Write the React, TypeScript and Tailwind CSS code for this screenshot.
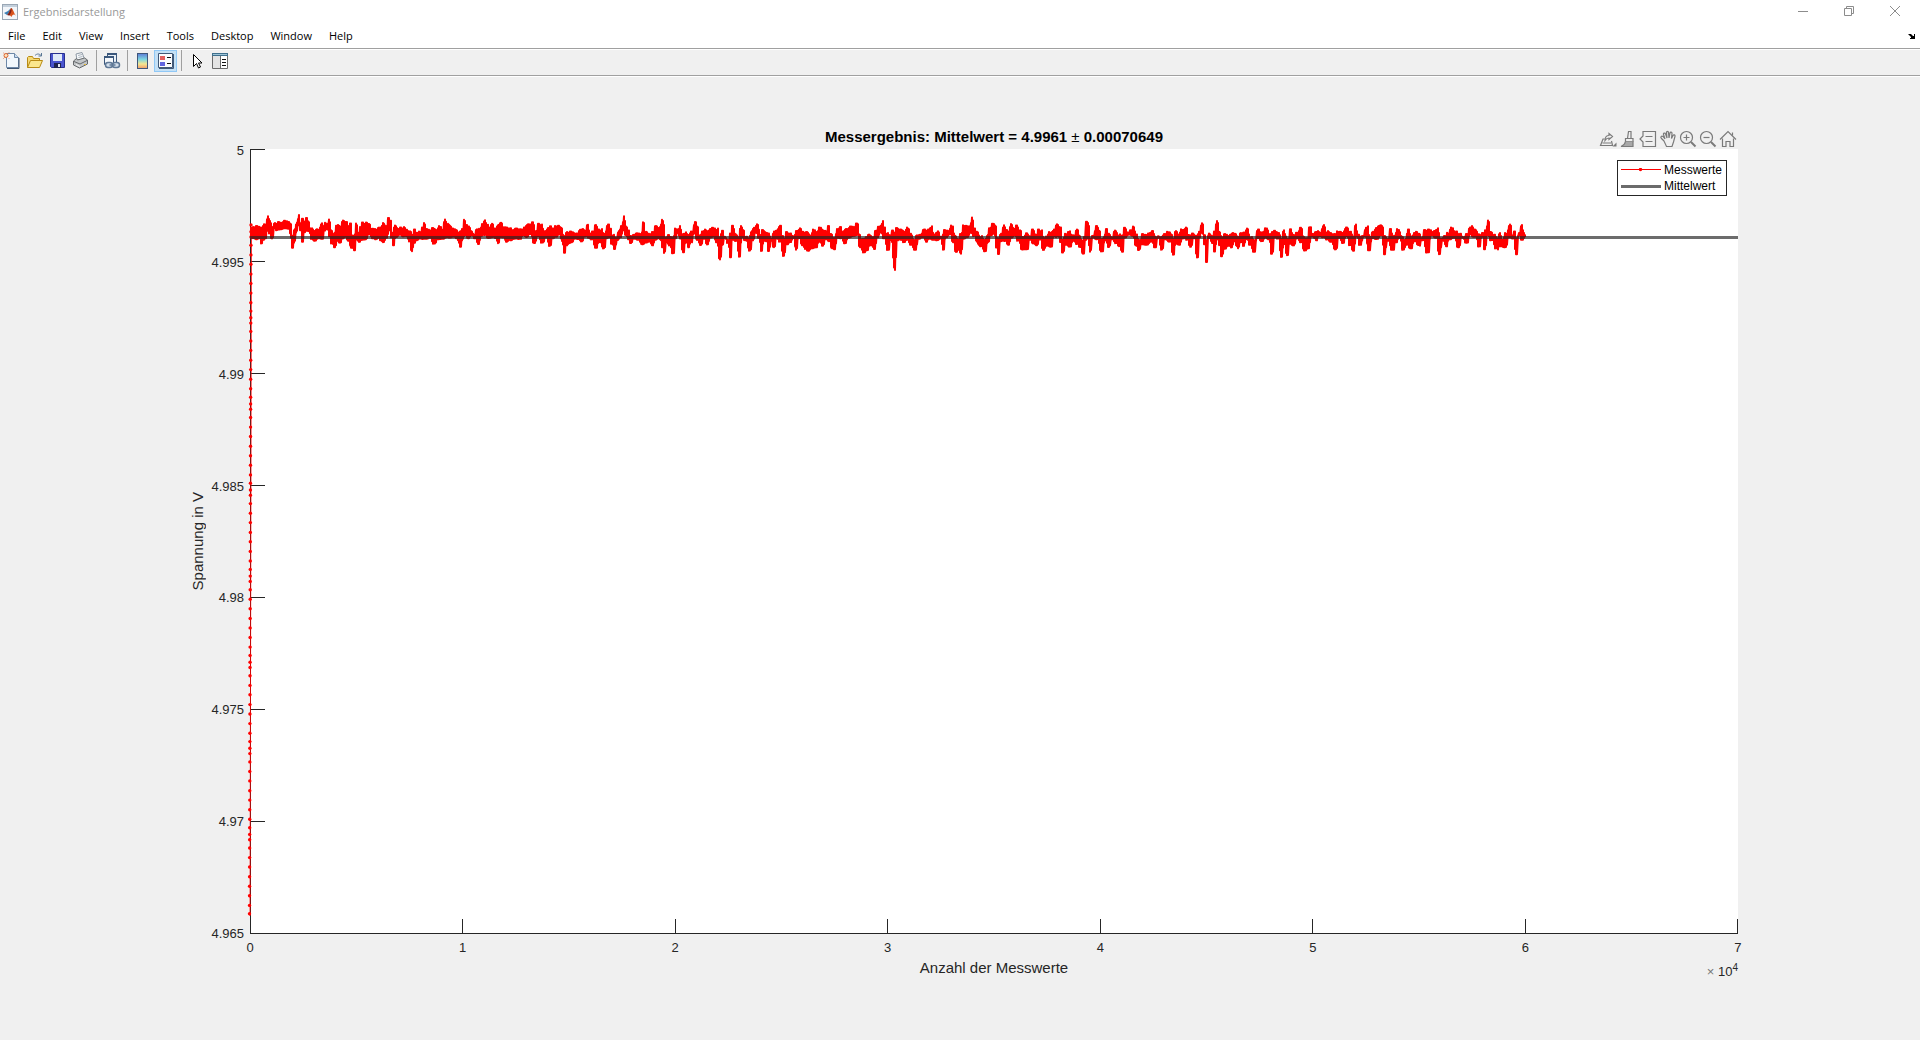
import type { ReactNode } from "react";

const MENUS = ["File", "Edit", "View", "Insert", "Tools", "Desktop", "Window", "Help"];
const Y_TICKS = ["5", "4.995", "4.99", "4.985", "4.98", "4.975", "4.97", "4.965"];
const X_TICKS = ["0", "1", "2", "3", "4", "5", "6", "7"];

// upper and lower outline of the measured signal, three values per plot unit
const SIGNAL = [
  {
    offset: -30,
    high: "33,78 45,74 62,74 66,82 72,66 78,68 83,44 90,56 97,78 105,64 120,62 133,58 147,57 152,68 158,100 163,88 168,68 172,62 176,37 181,66 187,50 194,56 200,50 207,60 212,80 225,86 236,84 244,66 250,74 256,62 262,66 268,54 273,84 282,96 290,70 298,74 303,74 308,54 315,62 320,60 326,70 331,66 338,100 342,105 349,66 354,92 362,78 368,62 375,64 390,66 395,82 410,80 420,78 425,74 430,66 438,72 446,50 452,56 457,90 466,72 474,78 490,78 500,84 510,90 517,98 524,80 530,94 540,88 548,78 553,62 558,84 570,84 578,80 590,82 600,74 608,80 615,54 622,68 630,72 636,78 645,84 660,90 668,80 673,50 678,70 686,72 694,90 702,96 712,84 718,80 728,68 735,54 741,66 748,78 755,68 765,80 772,72 785,62 792,78 800,76 812,80 820,86 830,80 845,84 855,74 868,66 878,62 888,90 897,66 905,70 912,88 925,80 932,72 940,80 948,72 955,74 965,78 972,104 982,90 1000,90 1010,96 1020,86 1030,82 1038,88 1043,68 1050,92 1060,90 1068,66 1075,84 1083,84 1092,96 1105,70 1112,80 1118,98 1128,108 1138,84 1146,72 1152,46 1158,74 1165,84 1172,104 1185,96 1200,94 1206,92 1210,62 1216,92 1226,96 1240,92 1248,70 1256,80",
    low: "33,112 40,118 50,122 58,120 64,136 70,126 76,122 82,100 88,108 96,124 104,94 120,92 135,90 148,92 152,120 158,150 165,130 170,100 176,84 182,100 187,128 193,100 200,96 207,98 214,122 224,128 236,122 246,124 255,100 262,92 268,112 275,134 285,146 292,128 300,134 308,122 316,118 325,130 334,152 344,154 350,122 358,130 366,124 376,124 388,110 398,122 408,126 415,122 422,124 430,130 440,118 448,96 454,118 460,142 468,118 480,112 490,118 500,112 508,128 516,158 522,134 530,126 540,122 548,124 560,124 570,122 583,134 595,122 610,122 620,118 630,120 640,118 652,124 663,144 668,120 675,110 685,120 695,112 705,122 716,140 724,116 735,108 745,118 760,116 768,120 774,136 782,118 790,120 800,134 810,124 825,120 840,122 850,112 860,118 870,110 884,138 892,112 908,132 918,118 930,144 938,122 948,118 958,112 966,126 973,162 980,140 988,134 995,132 1005,122 1015,124 1025,132 1035,118 1045,116 1055,122 1068,148 1078,132 1092,152 1100,122 1108,120 1115,140 1124,150 1132,124 1142,116 1150,96 1158,112 1165,124 1172,136 1182,124 1196,128 1208,136 1218,132 1228,130 1238,142 1246,126 1256,122",
  },
  {
    offset: 1230,
    high: "0,74 7,50 12,70 16,108 25,102 33,106 42,104 46,82 54,82 60,74 66,96 75,92 85,98 98,90 105,58 112,76 118,100 128,90 136,82 144,88 152,80 160,80 172,82 178,108 188,84 194,106 204,112 212,96 218,70 226,98 236,104 243,74 250,84 258,106 266,108 274,88 284,76 294,70 300,98 308,86 318,90 326,96 334,110 342,90 352,84 362,72 368,100 374,112 380,90 390,96 400,102 410,88 418,82 430,90 440,92 452,98 462,84 472,88 480,76 490,88 500,86 506,74 512,96 524,110 532,80 540,76 550,90 560,82 570,76 580,74 592,66 598,96 606,112 618,108 628,98 640,108 648,84 656,76 664,70 668,54 674,78 680,94 690,102 698,84 704,94 710,78 722,84 734,86 744,78 752,98 762,112 772,102 782,96 794,82 804,84 814,76 822,98 832,90 844,104 854,86 866,84 876,72 886,104 894,112 902,98 912,70 922,74 930,72 936,48 943,78 950,92 962,104 974,114 982,100 990,78 998,62 1006,72 1014,112 1024,96 1032,72 1038,84 1046,86 1054,68 1062,78 1070,72 1080,88 1088,106 1100,96 1110,102 1118,84 1128,96 1136,84 1144,88 1152,110 1160,102 1170,92 1182,84 1192,66 1202,78 1208,112 1218,98 1226,88 1236,100 1244,98 1251,84",
    low: "0,126 8,150 12,168 20,130 28,140 40,164 46,120 54,104 60,122 70,164 78,134 86,150 94,130 102,104 112,124 122,140 132,122 142,140 152,120 160,118 170,136 181,182 186,140 194,118 204,134 211,178 218,126 228,130 239,178 246,120 256,124 270,156 278,126 288,104 296,120 305,160 312,130 320,132 326,162 334,126 342,146 350,120 360,130 371,174 380,140 392,134 400,122 408,152 416,118 428,140 436,152 444,158 456,152 468,150 478,134 488,140 498,122 508,128 516,150 524,154 532,120 542,122 556,138 566,116 580,112 592,110 600,148 612,164 622,158 630,144 644,150 652,116 662,102 672,120 684,156 694,122 699,180 704,218 708,180 712,130 722,122 732,130 742,124 752,140 766,156 776,124 788,120 798,128 808,120 820,124 832,126 842,122 850,156 858,120 870,112 880,130 888,160 896,154 903,166 910,122 922,118 932,106 942,116 952,134 962,142 976,158 984,132 992,112 1002,108 1010,150 1015,170 1022,132 1034,126 1046,138 1054,118 1064,112 1074,128 1088,156 1102,156 1110,122 1120,134 1130,140 1140,124 1150,156 1160,144 1174,148 1182,118 1194,112 1202,130 1208,162 1218,140 1230,146 1240,130 1252,140",
  },
  {
    offset: 2490,
    high: "0,100 6,118 14,104 20,62 25,64 30,108 40,104 50,70 58,88 64,110 72,106 79,80 86,98 96,106 106,88 116,98 126,102 134,74 142,92 152,88 162,74 168,100 178,114 190,98 202,96 216,90 228,104 240,106 252,98 266,88 274,98 282,112 287,88 296,96 306,84 318,78 326,98 340,96 350,104 358,90 366,66 374,100 380,112 388,96 396,100 404,90 411,56 418,92 426,104 436,98 448,100 462,92 474,104 484,96 494,90 503,82 510,104 524,114 534,84 546,94 560,78 568,98 580,88 596,90 604,112 611,88 618,104 624,118 631,84 640,98 652,94 663,74 670,104 680,112 691,74 698,98 710,88 720,92 731,70 740,90 752,94 764,98 774,88 784,92 800,78 812,92 820,104 827,70 834,98 846,104 862,74 870,104 880,92 890,76 906,70 914,104 924,110 932,82 940,104 956,82 964,104 976,112 986,82 994,104 1006,92 1018,96 1026,110 1034,84 1048,84 1062,88 1072,82 1082,110 1094,104 1104,92 1116,78 1128,90 1140,98 1150,106 1160,98 1172,74 1186,82 1198,98 1210,96 1218,84 1224,58 1232,90 1244,100 1252,108 1258,94 1268,112 1278,96 1290,70 1298,100 1304,86 1310,110 1318,92 1325,70 1332,92 1336,98",
    low: "0,150 10,164 16,124 24,120 30,160 38,118 50,124 66,162 76,130 86,144 96,122 108,134 118,144 127,162 134,120 146,112 160,116 168,140 176,154 186,138 200,140 214,132 226,150 234,122 246,152 254,122 270,130 280,170 288,138 298,142 308,124 320,122 332,144 342,120 352,178 358,118 366,104 374,140 379,194 386,122 396,132 405,158 411,116 418,140 425,174 434,152 446,144 456,150 462,132 472,148 484,130 490,142 500,122 510,140 522,162 532,122 546,132 556,116 566,122 576,166 584,118 594,122 605,178 612,140 622,174 630,134 640,140 652,120 662,132 674,158 686,152 694,118 708,124 718,112 730,116 742,124 752,132 768,156 776,122 788,132 800,112 810,140 820,158 830,116 840,142 852,118 869,154 876,118 890,122 904,112 914,170 922,130 938,158 948,130 958,118 970,154 980,140 992,152 1004,132 1016,144 1026,124 1044,162 1054,112 1068,120 1078,170 1088,130 1098,142 1108,122 1122,118 1136,148 1146,118 1160,136 1172,112 1186,114 1198,144 1206,116 1215,154 1222,112 1234,128 1250,154 1260,142 1276,146 1288,118 1300,122 1309,170 1316,112 1326,128 1336,114",
  },
];

type Point = [number, number];

function readOutline(key: "high" | "low"): Point[] {
  return SIGNAL.flatMap((part) =>
    part[key].split(" ").map((pair): Point => {
      const [x, y] = pair.split(",").map(Number);
      return [(x + part.offset) / 3, y / 3 + 51];
    }),
  );
}

// steep interpolation: the samples form narrow columns, not slopes
function valueAt(points: Point[], x: number): number {
  const i = points.findIndex((p) => p[0] >= x);
  if (i <= 0) return points[i === 0 ? 0 : points.length - 1][1];
  const [x0, y0] = points[i - 1];
  const [x1, y1] = points[i];
  const t = Math.min(1, Math.max(0, ((x - x0) / (x1 - x0) - 0.5) * 3 + 0.5));
  return y0 + (y1 - y0) * t;
}

function buildTrace(): string {
  const high = readOutline("high");
  const low = readOutline("low");
  const out: string[] = [];
  for (let x = 1; x <= 1275; x += 1) {
    const column = Math.floor(x / 2);
    const top = valueAt(high, x) + 1 + ((column * 37) % 11) / 5;
    const bottom = Math.max(valueAt(low, x) - 1 - ((column * 53) % 13) / 6, top + 1);
    out.push(`${x},${top.toFixed(1)}`, `${x},${bottom.toFixed(1)}`);
  }
  return out.join(" ");
}

const TRACE = buildTrace();

// settling values at the start of the measurement
const SETTLING_STEPS = [6.7, 5.3, 8.3, 9.6, 9.4, 9.8, 9.4, 9.6, 9.6, 8.4];

function buildSettling(): Point[] {
  const out: Point[] = [];
  let y = 76;
  for (let i = 0; y < 768; i += 1) {
    out.push([1 - (y - 76) / 460, y]);
    y += SETTLING_STEPS[i % SETTLING_STEPS.length];
  }
  return out;
}

const SETTLING = buildSettling();

function Separator() {
  return (
    <div className="flex w-2 justify-center">
      <div className="h-[21px] w-px bg-[#a0a0a0]" />
    </div>
  );
}

function ToolButton({ label, pressed, children }: { label: string; pressed?: boolean; children: ReactNode }) {
  return (
    <button
      type="button"
      aria-label={label}
      aria-pressed={pressed}
      className={
        pressed
          ? "flex h-[22px] w-[23px] items-center justify-center border border-[#90c8f6] bg-[#c4e0f5]"
          : "flex h-[22px] w-[23px] items-center justify-center"
      }
    >
      <svg width="18" height="18" viewBox="0 0 18 18" fill="none">
        {children}
      </svg>
    </button>
  );
}

function AxesButton({ label, children }: { label: string; children: ReactNode }) {
  return (
    <button type="button" aria-label={label} className="flex h-5 w-5 items-center justify-center">
      <svg width="18" height="18" viewBox="0 0 18 18" fill="none" stroke="#7a7a7a" strokeWidth="1.2">
        {children}
      </svg>
    </button>
  );
}

function TitleBar() {
  return (
    <div className="flex h-6 items-center bg-white px-[2px]">
      <svg width="16" height="16" viewBox="0 0 16 16">
        <rect x=".5" y=".5" width="15" height="15" fill="#f3f6fa" stroke="#9aa7b5" />
        <path d="M1 1h14v2H1z" fill="#c3cfdb" />
        <path d="M2 9l4-2 3-3-2 6-2 1z" fill="#3d7fb5" />
        <path d="M5 11c2-1 3-7 4.500-7 1.500 1 2.500 5 4.500 8-2-2-3-2-4.500 1-1.500-2-2.500-2-4.500-2z" fill="#d9531e" />
        <path d="M5 11c1.500 0 3-5 4.500-7v3c-1 3-2 5-2.500 4.500z" fill="#7a1f1a" />
      </svg>
      <h1 className="ml-[5px] flex-1 font-['Open_Sans',sans-serif] text-[11px] leading-4 text-[#999999]">
        Ergebnisdarstellung
      </h1>
      <div className="flex items-center pb-[3px] text-[#8c8c8c]">
        <button type="button" aria-label="Minimize" className="flex w-[46px] justify-center">
          <svg width="10" height="10" viewBox="0 0 10 10" stroke="currentColor">
            <path d="M0 5.500h10" />
          </svg>
        </button>
        <button type="button" aria-label="Restore" className="flex w-[46px] justify-center">
          <svg width="10" height="10" viewBox="0 0 10 10" stroke="currentColor" fill="none">
            <path d="M.5 2.500h7v7h-7zM2.500 2.500v-2h7v7h-2" />
          </svg>
        </button>
        <button type="button" aria-label="Close" className="flex w-[46px] justify-center">
          <svg width="10" height="10" viewBox="0 0 10 10" stroke="currentColor">
            <path d="M0 0l10 10M10 0L0 10" />
          </svg>
        </button>
      </div>
    </div>
  );
}

function MenuBar() {
  return (
    <nav className="flex h-[25px] items-center border-b border-[#a0a0a0] bg-white pr-[5px] pl-2">
      <div className="flex flex-1 gap-[17px] font-['Open_Sans',sans-serif] text-[11px] leading-4 text-black">
        {MENUS.map((name) => (
          <button key={name} type="button">
            {name}
          </button>
        ))}
      </div>
      <button type="button" aria-label="Dock figure">
        <svg width="7" height="5" viewBox="0 0 7 5">
          <path d="M0 1l1-1h2l2 2h1V0h1v5H2V4h1V3L1 1z" fill="#000" />
        </svg>
      </button>
    </nav>
  );
}

function ToolBar() {
  return (
    <div className="flex h-[27px] items-start border-t border-b border-t-white border-b-[#a0a0a0] bg-[#f0f0f0]">
      <ToolButton label="New Figure">
        <path d="M3.500 1.500h8l4 4v10h-12z" fill="#f1f7fd" stroke="#6d88a8" />
        <path d="M11.500 1.500v4h4" fill="#c9dcf0" stroke="#6d88a8" />
        <path d="M16 6v10.500H4" stroke="#3f5572" />
        <circle cx="3" cy="3.500" r="2" fill="#fbe3c0" stroke="#e0662f" />
        <path d="M0 .5l1 1M6 .5l-1 1M.5 6.500l1-1M5.500 6l.5.5" stroke="#e0662f" />
      </ToolButton>
      <ToolButton label="Open File">
        <path d="M1.500 15.500v-10l1-1h4l1 2h6v3" fill="#f5d873" stroke="#b88a14" />
        <path d="M1.500 15.500l3-7h12l-3 7z" fill="#fbe78d" stroke="#b88a14" />
        <path d="M9 3.500c2-2 4-2 6 0M15.500 1v3h-3" stroke="#5a7795" />
      </ToolButton>
      <ToolButton label="Save Figure">
        <path d="M1.500 1.500h14v14h-13l-1-1z" fill="#4a55cf" stroke="#272f8f" />
        <path d="M4 2h9v7H4z" fill="#dfe9f8" />
        <path d="M5 11h7v5H5z" fill="#1f2450" />
        <path d="M9 12h2v3H9z" fill="#e4e8f2" />
      </ToolButton>
      <ToolButton label="Print Figure">
        <path d="M5 8L4 2l6-1.500L12.500 7z" fill="#f7f9fb" stroke="#8e99a5" />
        <path d="M6 3.500l4-1M6.500 5.500l4-1" stroke="#a9b3bd" />
        <path d="M1.500 9l3-2.500 1 1.500 7-2 3 2v4l-8 4-6-3z" fill="#c3c6c8" stroke="#686b6e" />
        <path d="M2 9.500l6 2.500 7-3.500" stroke="#686b6e" />
        <path d="M4 12.500l4 2" stroke="#f4f4f4" />
        <path d="M12 12.500h2" stroke="#e0b63c" />
      </ToolButton>
      <Separator />
      <ToolButton label="Link Plot">
        <path d="M4.500 1.500h9v9h-9z" fill="#e9f0f7" stroke="#3c587c" />
        <path d="M4 2h10" stroke="#3c587c" strokeWidth="2" />
        <path d="M1.500 4.500h9v8h-9z" fill="#f5f8fb" stroke="#3c587c" />
        <path d="M1 5h10" stroke="#3c587c" strokeWidth="2" />
        <rect x="2.500" y="10.500" width="7" height="5" rx="2.500" fill="#d3dfec" stroke="#5f7896" strokeWidth="1.500" />
        <rect x="9.500" y="10.500" width="7" height="5" rx="2.500" fill="#d3dfec" stroke="#5f7896" strokeWidth="1.500" />
        <path d="M6.500 13h6" stroke="#5f7896" strokeWidth="1.500" />
      </ToolButton>
      <Separator />
      <ToolButton label="Insert Colorbar">
        <defs>
          <linearGradient id="bar" x1="0" y1="0" x2="0" y2="1">
            <stop offset="0" stopColor="#5c7bd6" />
            <stop offset=".4" stopColor="#7fd8e0" />
            <stop offset=".7" stopColor="#f5e690" />
            <stop offset="1" stopColor="#ee9b6c" />
          </linearGradient>
        </defs>
        <rect x="3.500" y="1.500" width="10" height="15" fill="url(#bar)" stroke="#40567a" />
      </ToolButton>
      <ToolButton label="Insert Legend" pressed>
        <path d="M1.500 1.500h14v14h-14z" fill="#f9fbfe" stroke="#3f5878" />
        <path d="M16.500 2v14.500H2" stroke="#3f5878" />
        <path d="M3 4h5v4H3z" fill="#e25f60" />
        <path d="M3 10h5v4H3z" fill="#5f64e0" />
        <path d="M10 5.500h4M10 11.500h4" stroke="#111" />
      </ToolButton>
      <Separator />
      <ToolButton label="Edit Plot">
        <path d="M5.500 2.500v12l3-3 2 4.500 2-1-2-4h3.500z" fill="#fff" stroke="#000" />
      </ToolButton>
      <ToolButton label="Open Property Inspector">
        <path d="M1.500 1.500h15v15h-15z" fill="#fff" stroke="#6b6b6b" />
        <path d="M1 1h16v3H1z" fill="#3f6f8c" />
        <path d="M2 2h14v1H2z" fill="#9cc3d6" />
        <path d="M2 4h7v12H2z" fill="#e4e4e4" />
        <path d="M9.500 4v12" stroke="#6b6b6b" />
        <path d="M11 7.500h4M11 10.500h4M11 13.500h4" stroke="#111" />
      </ToolButton>
    </div>
  );
}

function AxesToolbar() {
  return (
    <div className="flex justify-self-end">
      <AxesButton label="Export">
        <path d="M5.500 9H4l-2.500 6.500h12L12.500 11M3.500 13h8.500" />
        <path d="M6 10.500c0-3.500 1.500-5 4-5v-2l3.500 3-3.500 3V8c-2 0-3 .8-4 2.500z" />
        <path d="M17.500 12.500v4h-4z" fill="#7a7a7a" stroke="none" />
      </AxesButton>
      <AxesButton label="Brush/Select Data">
        <path d="M8.500 8.500l1-7h2.500v7" />
        <path d="M6.500 8.500h7.500v3H6.500z" />
        <path d="M6.500 11.500c-.5 2.500-2 4-4.500 5h12v-5" fill="#a8a8a8" />
      </AxesButton>
      <AxesButton label="Data Tips">
        <path d="M4 1.500h12.500v15H4V12l-3-3 3-3z" />
        <path d="M6.500 6.500h7M6.500 11.500h7" />
      </AxesButton>
      <AxesButton label="Pan">
        <path d="M5 11L2.500 8.500C1 7 2.500 5.500 4 6.500L6 9 4.500 4.500c-.5-1.500 1.500-2 2-.7L8 8l-.5-5.500c0-1.500 2-1.500 2 0L10 8l1-5c.3-1.300 2.200-1 2 .5L12.500 8.500 14 5.500c.7-1.200 2.300-.6 2 .8L14.500 12l-1.500 4.500H7.500z" />
      </AxesButton>
      <AxesButton label="Zoom In">
        <circle cx="7.500" cy="7.500" r="6" />
        <path d="M4.500 7.500h6M7.500 4.500v6" />
        <path d="M12 12l4.500 4.500" strokeWidth="2" />
      </AxesButton>
      <AxesButton label="Zoom Out">
        <circle cx="7.500" cy="7.500" r="6" />
        <path d="M4.500 7.500h6" />
        <path d="M12 12l4.500 4.500" strokeWidth="2" />
      </AxesButton>
      <AxesButton label="Restore View">
        <path d="M1 9.500L9 1.500l8 8" />
        <path d="M3.500 8.500v8h3.500v-5h4v5h3.500v-8M13.500 5.500v-3" />
      </AxesButton>
    </div>
  );
}

function Legend() {
  return (
    <div className="absolute top-[11px] right-[11px] flex flex-col border border-[#262626] bg-white py-px pr-1 pl-[3px] text-[12px] leading-4 text-black">
      <div className="flex items-center gap-[3px]">
        <svg width="40" height="5" viewBox="0 0 40 5">
          <path d="M0 1.500h40" stroke="#f00" />
          <circle cx="19.500" cy="1.500" r="1.700" fill="#f00" />
        </svg>
        Messwerte
      </div>
      <div className="flex items-center gap-[3px]">
        <svg width="40" height="5" viewBox="0 0 40 5">
          <path d="M0 2.500h40" stroke="#6b6b6b" strokeWidth="3" />
        </svg>
        Mittelwert
      </div>
    </div>
  );
}

function Plot() {
  return (
    <div className="relative bg-white">
      <svg
        className="absolute inset-0 h-full w-full overflow-visible"
        viewBox="0 0 1488 785"
        preserveAspectRatio="none"
        fill="none"
      >
        <path d="M.5 0v784.500H1488" stroke="#262626" />
        {Y_TICKS.map((t, i) => (
          <path key={t} d={`M0 ${0.5 + i * 112}h15`} stroke="#262626" />
        ))}
        {X_TICKS.map((t, i) => (
          <path key={t} d={`M${Math.round((i * 1487) / 7) + 0.5} 785v-15`} stroke="#262626" />
        ))}
        <path d="M1.500 89L0 767" stroke="#f00" strokeOpacity=".8" />
        {SETTLING.map(([x, y]) => (
          <circle key={y} cx={x} cy={y} r="1.700" fill="#f00" />
        ))}
        <polyline points={TRACE} stroke="#f00" strokeWidth="2" strokeLinejoin="round" />
        <path d="M0 88.500h1488" stroke="#242424" strokeOpacity=".67" strokeWidth="3" />
      </svg>
      <Legend />
    </div>
  );
}

export default function App() {
  return (
    <div className="flex min-h-screen flex-col bg-[#f0f0f0]">
      <TitleBar />
      <MenuBar />
      <ToolBar />
      <main className="grid flex-1 grid-cols-[250px_1fr_182px] grid-rows-[72px_1fr_106px] border-t border-white font-['Liberation_Sans',Arial,sans-serif] text-[13px] leading-4 text-[#262626]">
        <div className="col-start-2 grid grid-cols-[1fr_auto_1fr] items-end">
          <h2 className="col-start-2 pb-1 text-[15px] font-bold text-black">
            Messergebnis: Mittelwert = 4.9961 <span className="font-normal">±</span> 0.00070649
          </h2>
          <AxesToolbar />
        </div>

        <div className="col-start-1 row-start-2 flex justify-end gap-[5px] pr-[6px]">
          <div className="flex items-center">
            <span className="rotate-180 text-[15px] [writing-mode:vertical-rl]">Spannung in V</span>
          </div>
          <div className="flex flex-col justify-between pt-[2px] text-right">
            {Y_TICKS.map((t) => (
              <span key={t} className="flex h-0 items-center justify-end">
                {t}
              </span>
            ))}
          </div>
        </div>

        <div className="col-start-2 row-start-2 grid">
          <Plot />
        </div>

        <div className="col-start-2 row-start-3 pt-[6px]">
          <div className="flex justify-between">
            {X_TICKS.map((t) => (
              <span key={t} className="flex w-0 justify-center">
                {t}
              </span>
            ))}
          </div>
          <div className="grid grid-cols-[1fr_auto_1fr] items-start pt-1">
            <span className="col-start-2 text-[15px]">Anzahl der Messwerte</span>
            <span className="justify-self-end pt-1">
              <span className="text-[#777777]">×</span> 10<sup className="text-[10px]">4</sup>
            </span>
          </div>
        </div>
      </main>
    </div>
  );
}
